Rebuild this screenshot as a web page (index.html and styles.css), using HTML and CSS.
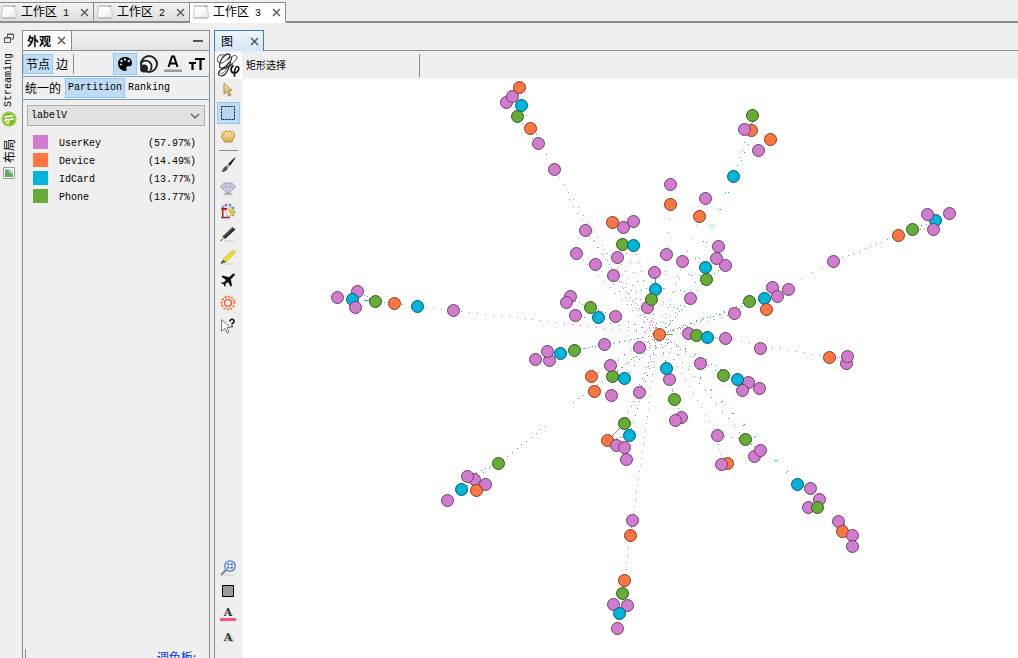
FILE: index.html
```html
<!DOCTYPE html>
<html lang="zh-CN">
<head>
<meta charset="utf-8">
<title>Gephi</title>
<link rel="stylesheet" href="styles.css">
</head>
<body>
<svg class="defs" aria-hidden="true">
  <defs>
    <linearGradient id="paper" x1="0" y1="0" x2="1" y2="1"><stop offset="0.4" stop-color="#fff"/><stop offset="1" stop-color="#e6e2e2"/></linearGradient>
    <linearGradient id="gold" x1="0" y1="0" x2="0" y2="1"><stop offset="0" stop-color="#fff0b8"/><stop offset="1" stop-color="#d9a43c"/></linearGradient>
    <symbol id="win" viewBox="0 0 16 14"><path d="M1.500.5h13l1 12H.5z" fill="url(#paper)" stroke="#c9c6c6"/><path d="M2 1.500h12" stroke="#d9d3d3"/><path d="M11 1.500h3" stroke="#e08a78"/><path d="M1 13.500h14" stroke="#999" opacity=".5"/></symbol>
    <symbol id="close" viewBox="0 0 9 9"><path d="M1 1l7 7M8 1l-7 7" stroke="#555" stroke-width="1.400"/></symbol>
  </defs>
</svg>

<nav class="workspaces" aria-label="工作区">
  <div class="workspace first"><svg class="win"><use href="#win"/></svg><button class="tab-name">工作区<span class="latin"> 1</span></button><button class="close" aria-label="关闭"><svg><use href="#close"/></svg></button></div>
  <div class="workspace"><svg class="win"><use href="#win"/></svg><button class="tab-name">工作区<span class="latin"> 2</span></button><button class="close" aria-label="关闭"><svg><use href="#close"/></svg></button></div>
  <div class="workspace active"><svg class="win"><use href="#win"/></svg><button class="tab-name">工作区<span class="latin"> 3</span></button><button class="close" aria-label="关闭"><svg><use href="#close"/></svg></button></div>
  <div class="workspace-rest"></div>
</nav>

<main class="work">
  <aside class="rail">
    <button class="rail-restore" aria-label="还原"><svg width="10" height="11" viewBox="0 0 10 11"><path d="M3.500 5V1h6v5h-3M3 1.500h7" fill="none" stroke="#555"/><path d="M.5 4.500h6v5h-6zM0 5h7" fill="none" stroke="#555"/></svg></button>
    <button class="rail-tab latin">Streaming</button>
    <svg class="rail-icon" width="16" height="16" viewBox="0 0 16 16"><circle cx="8" cy="8" r="7.500" fill="#79bd1f"/><circle cx="8" cy="8" r="6.500" fill="none" stroke="#a9d965"/><path d="M4 7c1.500-3 2.500-1 4-1.500S10 4 12 5.500M3.500 10c2-3 3-.5 4.500-1s2.500-2 4.500-.5M5 12.300c1.500-2 2-.3 3.500-.8" fill="none" stroke="#fff" stroke-width="1.700"/></svg>
    <button class="rail-tab layout-tab">布局</button>
    <svg width="12" height="12" viewBox="0 0 12 12"><path d="M.5.5h11v11H.5z" fill="#fff" stroke="#999"/><path d="M2 2h8v8H2z" fill="#6fbfd6"/><path d="M2 4l2-1 2 3 4 2v2H2z" fill="#6aa84f"/><path d="M6 2h4v4L8 5z" fill="#d9efc0"/></svg>
  </aside>

  <section class="appearance">
    <header class="panel-head">
      <div class="panel-tab"><h2>外观</h2><button class="close" aria-label="关闭"><svg><use href="#close"/></svg></button></div>
      <button class="minimize" aria-label="最小化"></button>
    </header>
    <div class="bar elements">
      <button class="pick on">节点</button><button class="pick">边</button><span class="rule"></span>
      <div class="attributes">
        <button class="attr on" aria-label="颜色"><svg width="18" height="18" viewBox="0 0 18 18"><path d="M9 2C4.500 2 2 5 2 8.500S5 16 9 16c2.200 0 1.500-2 1.300-2.800C10 12 11 11 12.500 11.200c2 .3 3.500-.5 3.500-3C16 4.500 13 2 9 2z" fill="#000"/><g fill="#bcdcf4"><circle cx="5" cy="9.500" r="1.100"/><circle cx="5.500" cy="6" r="1.200"/><circle cx="9" cy="4.500" r="1.200"/><circle cx="12.800" cy="6" r="1.200"/></g></svg></button>
        <button class="attr" aria-label="大小"><svg width="20" height="20" viewBox="0 0 20 20"><circle cx="10" cy="10" r="8" fill="#f4f4f4" stroke="#222" stroke-width="2"/><path d="M2.500 8.500A5.800 5.800 0 1 1 11 16.500" fill="none" stroke="#222" stroke-width="1.800"/><circle cx="5" cy="14.500" r="4" fill="#222"/></svg></button>
        <button class="attr" aria-label="标签颜色"><svg width="18" height="18" viewBox="0 0 18 18"><path d="M4.500 12L8 1.500h2L13.500 12M6 8.500h6" fill="none" stroke="#000" stroke-width="2"/><path d="M0 14.500h18v2.500H0z" fill="#999"/></svg></button>
        <button class="attr" aria-label="标签大小"><svg width="16" height="18" viewBox="0 0 16 18"><path d="M6 4h10M11.500 3v12M0 8h7M3.500 7v8" fill="none" stroke="#000" stroke-width="2.200"/></svg></button>
      </div>
    </div>
    <div class="bar modes"><button class="pick unique">统一的</button><button class="pick latin on">Partition</button><button class="pick latin">Ranking</button></div>
    <div class="partition">
      <label class="combo"><select class="latin" aria-label="属性"><option>labelV</option></select><svg width="10" height="6" viewBox="0 0 10 6"><path d="M1 1l4 4 4-4" fill="none" stroke="#555" stroke-width="1.200"/></svg></label>
      <table class="legend latin">
        <tr><td class="swatch"><i class="user"></i></td><td>UserKey</td><td class="share">(57.97%)</td></tr>
        <tr><td class="swatch"><i class="device"></i></td><td>Device</td><td class="share">(14.49%)</td></tr>
        <tr><td class="swatch"><i class="card"></i></td><td>IdCard</td><td class="share">(13.77%)</td></tr>
        <tr><td class="swatch"><i class="phone"></i></td><td>Phone</td><td class="share">(13.77%)</td></tr>
      </table>
    </div>
    <footer class="palette"><a href="#palette">调色板:</a></footer>
  </section>

  <section class="graph">
    <header class="graph-head"><div class="graph-tab"><h2>图</h2><button class="close" aria-label="关闭"><svg><use href="#close"/></svg></button></div></header>
    <div class="graph-bar">
      <svg class="logo" width="27" height="27" viewBox="0 0 27 27"><g fill="none" stroke="#333" stroke-linecap="round"><path d="M12.500 7.500C15 5.500 16 2 13.500 2 9 2 4.500 9 4.500 13.500c0 4 4 3 7 0 3-3 5.500-6.500 5-8" stroke-width="1.300"/><path d="M9 3C5 1.500 1.500 5 2.500 9c1 3 5 2.500 8 0 4-3 9-7 11-5s-2 6-5 8" stroke-width=".9"/><path d="M15.500 10c-1.500 6-4 14-9 14-4 0-4-4-1-6s8-2.500 12-6" stroke-width="1.200"/><path d="M13.500 10.500c-1 5-3.500 11-7.500 11-2 0-2-2 0-3.500 3-2 7-1 9.500-4" stroke-width=".7"/><path d="M18 14c-3 2-2.500 7 1.500 7s6-6.500 2.500-6.500c-2 0-2.500 4-2.500 9.500" stroke="#111" stroke-width="1.700"/></g></svg>
      <span class="tool-name">矩形选择</span><span class="rule"></span>
    </div>
    <div class="graph-body">
      <div class="tools" role="toolbar" aria-label="工具">
        <button class="tool" aria-label="直接选择"><svg viewBox="0 0 16 16"><path d="M4 1l8 7.500H8.800l2 4.800-2 .9-2-4.700L4 12z" fill="url(#gold)" stroke="#b1864b"/></svg></button>
        <button class="tool on" aria-label="矩形选择"><svg viewBox="0 0 16 16"><path d="M1.500 1.500h13v13h-13z" fill="#b4d8f4" stroke="#111" stroke-dasharray="2 1"/></svg></button>
        <button class="tool" aria-label="拖动"><svg viewBox="0 0 16 16"><path d="M4.500 14C4 11.500 1.500 10.500 1.500 8.500c0-1.200 1-1.500 1.500-1.200C1.500 4.500 3.500 3 5 4.200c.3-1.700 2.700-1.700 3.200-.4C9 2.300 11.200 2.500 11.500 4c1.500-.8 2.700.2 2.500 2 1 2 .2 4.200-1.500 5.500l-.5 2.500z" fill="url(#gold)" stroke="#b78a3a"/><path d="M5 4.500v2M8.200 4v2M11.500 4.500v2" stroke="#c89b49" stroke-width=".8"/></svg></button>
        <hr>
        <button class="tool" aria-label="画笔"><svg viewBox="0 0 16 16"><path d="M14.500.5L8 7l2 2L15.500 1z" fill="#222"/><path d="M8 7l2 2-2 2-2-2z" fill="#aaa"/><path d="M6 9l2 2c-1 3-4 4-7 4 2-1 2-5 5-6z" fill="#555244"/></svg></button>
        <button class="tool" aria-label="大小画笔"><svg viewBox="0 0 16 16"><ellipse cx="8" cy="14" rx="5" ry="1.200" fill="#bbb"/><path d="M4 3h8l3.500 4L8 14 .5 7z" fill="#d6d5ec" stroke="#9897b5"/><path d="M1 7h14M4 3l1.500 4L8 13l2.500-6L12 3M5.500 7L8 3l2.500 4" fill="none" stroke="#9f9ebd" stroke-width=".7"/></svg></button>
        <button class="tool" aria-label="油漆桶"><svg viewBox="0 0 16 16"><g><circle cx="3" cy="4" r="1.500" fill="#9b7bd4"/><circle cx="6" cy="2" r="1.500" fill="#ca62bd"/><circle cx="10" cy="2" r="1.500" fill="#55a3dc"/><circle cx="13" cy="5" r="1.500" fill="#54b568"/><circle cx="14" cy="9" r="1.500" fill="#81c84e"/><circle cx="13" cy="12" r="1.500" fill="#d6a744"/></g><path d="M5 7l6-3 3 6-6 4z" fill="#fff" stroke="#aaa"/><path d="M8 7l3-1.500 2 4-3 2z" fill="#f6ba20"/><path d="M1 5h6v2H3.500v7H2V8z" fill="#b91c25"/><path d="M1 14.500h9" stroke="#a12b2b" stroke-width="1.500"/></svg></button>
        <button class="tool" aria-label="铅笔"><svg viewBox="0 0 16 16"><path d="M4 15h10" stroke="#ccc"/><path d="M12.500 1l3 2.500L5 13l-2.500-2.500z" fill="#292929"/><path d="M13 2L4 10.500" stroke="#777"/><path d="M2.500 10.500L5 13l-4.500 2z" fill="#d4bd94"/><path d="M.5 15l1.700-.7-.9-1z" fill="#111"/></svg></button>
        <button class="tool" aria-label="边铅笔"><svg viewBox="0 0 16 16"><path d="M4 15h10" stroke="#ccc"/><path d="M13.500 1l2 2L6 13l-3-2.500z" fill="#f2e51a" stroke="#a9a41b" stroke-width=".7"/><path d="M3 10.500L6 13l-4.500 2-1-1z" fill="#62635d"/></svg></button>
        <button class="tool" aria-label="最短路径"><svg viewBox="0 0 16 16"><path d="M14.500 2c-1-1-2 0-3.500 1.500L9 5.200 2.500 3.500l-1 1.200L6 8l-2.300 2.500-2.200-.3-.7.8 2.700 1.300 1.300 2.700.8-.8-.1-2.200L8 10l2.800 4.700 1.200-1.200L10.800 7.200 13 5c1.500-1.500 2.500-2 1.500-3z" fill="#15120b"/></svg></button>
        <button class="tool" aria-label="热图"><svg viewBox="0 0 16 16"><g fill="none" stroke="#ff7a2c"><circle cx="8" cy="8" r="6.400" stroke-width="2.300" stroke-linecap="round" stroke-dasharray=".1 3.251"/><circle cx="8" cy="8" r="3.400" stroke="#ff5a36" stroke-width="1.400"/></g></svg></button>
        <button class="tool" aria-label="编辑"><svg viewBox="0 0 16 16"><path d="M1.500 1.500l9 8H7l2 4.500-2 1-2-4.700-3.500 3z" fill="#fff" stroke="#777"/><path d="M10 3.500C10 .5 14.500.5 14 3.500 14 5 12 5 12 6.500M12 7.500v1.700" fill="none" stroke="#222" stroke-width="1.700"/></svg></button>
        <span class="gap"></span>
        <button class="tool" aria-label="居中"><svg viewBox="0 0 16 16"><path d="M6 10l-5 5" stroke="#8a8a8a" stroke-width="2.400"/><path d="M4 15h10" stroke="#ccc"/><circle cx="10" cy="6" r="5.200" fill="#eaf2ff" stroke="#4e72d2" stroke-width="1.300"/><path d="M8 5.500V4h1.500M10.500 4H12v1.500M12 6.500V8h-1.500M9.500 8H8V6.500" fill="none" stroke="#17378c" stroke-width="1.100"/></svg></button>
        <button class="tool" aria-label="背景颜色"><svg viewBox="0 0 16 16"><path d="M2.500 2.500h11v11h-11z" fill="#999" stroke="#000"/></svg></button>
        <button class="tool letter" aria-label="重置标签颜色"><span>A</span><i></i></button>
        <button class="tool letter shadow" aria-label="显示标签"><span>A</span></button>
      </div>
      <svg id="canvas" class="canvas" viewBox="242 79 776 579" preserveAspectRatio="xMinYMin meet" role="img" aria-label="图"></svg>
    </div>
  </section>
</main>
<script src="graph.js"></script>
</body>
</html>
```

FILE: styles.css
```css
* { box-sizing: border-box; }
body {
  margin: 0;
  height: 100vh;
  overflow: hidden;
  display: flex;
  flex-direction: column;
  background: #efefef;
  color: #000;
  font: 12px/16px "Noto Sans CJK SC", sans-serif;
}
button { border: 0; padding: 0; margin: 0; background: none; color: inherit; font: inherit; white-space: pre; }
h2 { margin: 0; font: inherit; }
svg { display: block; flex: none; }
.defs { position: absolute; width: 0; height: 0; }
.latin { font-family: "Liberation Mono", monospace; font-size: 10px; }
.close { display: flex; }
.close svg { width: 9px; height: 9px; }
.rule { width: 1px; background: #898989; }

.workspaces { display: flex; height: 23px; padding-top: 2px; flex: none; }
.workspace {
  display: flex;
  align-items: center;
  width: 96px;
  padding: 0 4px 0 3px;
  border: solid #898c95;
  border-width: 1px 1px 2px 0;
  background: linear-gradient(#f2f2f2, #dfdfdf);
}
.workspace.first { width: 94px; padding-left: 1px; }
.workspace.active { background: #fff; border-bottom-color: #fff; }
.workspace .win { width: 16px; height: 14px; margin-right: 4px; }
.workspace .close { margin-left: auto; }
.workspace-rest { flex: 1; border-bottom: 2px solid #898c95; }

.work { flex: 1; min-height: 0; display: flex; padding-top: 7px; }
.rail { width: 22px; flex: none; display: flex; flex-direction: column; align-items: center; padding: 3px 4px 0 0; }
.rail-restore { height: 11px; }
.rail-tab { writing-mode: vertical-rl; text-orientation: sideways; transform: rotate(180deg); margin-top: 9px; }
.rail-tab.layout-tab { margin-top: 12px; }
.rail-icon { margin-top: 4px; }
.rail > svg:last-child { margin-top: 4px; }

.appearance { width: 188px; flex: none; display: flex; flex-direction: column; border: solid #898c95; border-width: 1px 1px 0; }
.panel-head { display: flex; height: 20px; border-bottom: 1px solid #898c95; background: linear-gradient(#f2f2f2, #e2e2e2); }
.panel-tab { display: flex; align-items: center; gap: 6px; padding: 0 5px 0 4px; background: #fff; border-right: 1px solid #898c95; }
.panel-tab h2 { font-weight: 700; }
.minimize { width: 10px; height: 2px; background: #555; margin: 9px 6px 0 auto; }
.bar { display: flex; border-bottom: 1px solid #7f9db9; }
.pick { border: 1px solid transparent; padding: 0 2px; }
.pick.on, .attr.on, .tool.on { background: #c0dcf3; border-color: #90c8f6; }
.elements { height: 26px; padding: 3px 0 2px; }
.elements .rule { margin-left: 2px; }
.attributes { display: flex; align-items: stretch; margin: -1px 0 -1px auto; }
.attr { width: 24px; border: 1px solid transparent; display: flex; align-items: center; justify-content: center; }
.modes { height: 23px; padding: 1px 0 1px; }
.modes .unique { padding: 0 3px 0 1px; }
.partition { flex: 1; padding: 5px 4px; }
.combo { display: flex; align-items: center; height: 21px; border: 1px solid #adadad; background: #e1e1e1; padding-right: 4px; }
.combo select { flex: 1; border: 0; padding: 0 3px; background: none; appearance: none; color: inherit; }
.legend { width: 100%; margin-top: 9px; border-collapse: collapse; }
.legend td { height: 18px; padding: 0; line-height: 16px; }
.legend .swatch { width: 32px; padding-left: 6px; vertical-align: top; }
.legend i { display: block; width: 15px; height: 14px; }
.legend .share { text-align: right; padding-right: 9px; }
.user { background: #d17ccf; }
.device { background: #ff7543; }
.card { background: #00b5db; }
.phone { background: #67ac36; }
.palette { height: 9px; overflow: hidden; display: flex; justify-content: flex-end; margin-left: 2px; padding-right: 13px; border-left: 1px solid #898989; }
.palette a { color: #0033ff; text-decoration: none; }

.graph { flex: 1; min-width: 0; margin-left: 4px; display: flex; flex-direction: column; border-left: 1px solid #898c95; }
.graph-head { display: flex; height: 21px; flex: none; border-bottom: 1px solid #898c95; margin-left: -1px; }
.graph-tab { display: flex; align-items: center; gap: 17px; height: 21px; padding: 0 4px 0 6px; border: solid #3c7fb1; border-width: 1px 1px 0; background: linear-gradient(#eef5fd, #d5e6f8); }
.graph-bar { display: flex; align-items: center; height: 28px; flex: none; font-size: 10px; }
.logo { background: #fff; }
.tool-name { margin-left: 4px; }
.graph-bar .rule { height: 23px; margin-left: 133px; }
.graph-body { flex: 1; min-height: 0; display: flex; background: #fff; }
.tools { width: 27px; flex: none; display: flex; flex-direction: column; align-items: center; gap: 1px; padding-bottom: 10px; background: #efefef; }
.tool { width: 23px; height: 22px; border: 1px solid transparent; padding-right: 1px; display: flex; align-items: center; justify-content: center; }
.tool svg { width: 16px; height: 16px; }
.tools hr { width: 19px; margin: 2px 0; border: 0; border-top: 1px solid #898989; }
.gap { flex: 1; }
.letter { flex-direction: column; font: bold 11px/11px "DejaVu Serif", serif; color: #333; }
.letter i { width: 16px; height: 3px; background: #ff527d; }
.shadow { text-shadow: 2px 1px #c5c5c5; }
.canvas { flex: 1; min-width: 0; width: 100%; height: 100%; }
.node.p { fill: #d17ccf; stroke: #684068; }
.node.o { fill: #ff7543; stroke: #803a21; }
.node.b { fill: #00b5db; stroke: #005a6d; }
.node.g { fill: #67ac36; stroke: #33561b; }
.edge { shape-rendering: crispEdges; }
.edge.p { fill: #d17ccf; }
.edge.b { fill: #00b5db; }
.edge.g { fill: #67ac36; }
```

FILE: graph.js
```js
// Node kinds: p = UserKey, o = Device, b = IdCard, g = Phone. Later nodes are drawn on top.
const nodes = `
p506,102 p512,96 o519,87 g517,116 b521,105 o530,128 p538,143 p554,169
o751,130 g752,115 p744,129 o770,139 p758,150 b733,176
p670,184 o670,204 p705,198 o699,216
o612,222 p623,227 p633,221 g622,244 b633,245 p617,257
p585,230 p576,253 p595,264 p613,275 p666,254 p682,261 p654,272
p718,246 p725,265 p716,258 b705,267 g706,279
b655,289 p647,307 g651,299 p690,298
p570,296 p566,302 p575,315 g590,307 b598,317 p615,316
o659,334 p688,333 g696,335 b707,337 p725,338 p760,348
p734,313 g749,301 b764,298 p772,287 p777,296 p788,289 o766,309
p639,347 p604,344 p700,363 p669,379 b666,368 g674,399
g612,376 p610,365 b624,378 o591,376 o594,391 p611,395 p639,392
g723,375 p748,382 p742,390 b737,379 p759,388
p535,359 p549,360 p547,351 b560,353 g574,350
p337,297 p357,291 b352,299 p355,307 g375,301 o394,303 b417,306 p453,310
g498,463 p474,479 p467,476 b461,489 p485,484 o476,490 p447,500
g624,423 o607,440 p616,445 p624,447 b629,435 p626,459
p681,417 p675,420 p717,435 o727,463 p721,464 g745,439 p754,456 p760,450
b797,484 p810,488 p819,499 p808,507 g817,507 p838,521 o842,531 p852,535 p852,546
p632,520 o630,535 o829,357 p846,363 p847,356
o624,580 g622,593 p613,604 p627,605 b619,613 p617,628
p833,261 o898,235 g912,229 b935,220 p927,214 p933,229 p949,213`;

// Each edge: kind, start, end, distance between dots.
const edges = `
p554,169,659,334,9 p569,199,652,334,8 g517,116,542,152,9 b521,105,554,169,11
p585,230,655,330,7 p576,253,655,333,8 p595,264,659,334,9 p617,257,659,334,8 p613,275,659,334,7
g622,244,659,334,10 b633,245,659,334,9 b655,272,655,289,1 p647,307,659,334,4
p670,204,661,334,14 p705,198,661,331,14 p666,254,659,334,17 p682,261,659,334,8
b733,176,660,334,18 b735,176,665,334,18 b744,142,733,176,8 b748,144,738,166,9 g752,115,751,130,1
b705,267,661,334,9 g706,279,660,334,7 p690,298,661,334,7 g706,279,725,265,5
p453,310,659,334,8 p417,306,453,310,8 g364,295,375,301,3 b364,300,368,300,1 g375,301,417,306,9
g575,301,590,307,4 g590,307,615,316,4 b575,315,659,334,9 p615,316,659,334,7 g598,309,659,334,8
g574,350,604,344,3 b560,353,659,334,6 p604,344,659,334,5
g498,463,547,424,6 g573,402,659,339,6 g467,476,498,463,5 b461,489,492,466,7
p610,365,659,334,9 b624,378,659,334,8 g612,376,659,334,7 p591,376,655,334,8
g624,423,659,334,6 b629,435,659,334,7 p639,392,659,334,7 g624,423,607,440,1 g607,440,629,435,3
p632,520,658,334,7 p632,520,624,580,7 b666,368,659,334,7 g674,399,659,334,8 g669,379,681,417,10
p717,435,659,334,8 p721,464,717,435,5 g745,439,659,334,9 g717,435,745,439,7
b797,484,659,334,16 b798,483,662,336,16 g744,440,760,450,4 b797,484,819,499,6 b840,519,852,535,3
p700,363,659,334,6 g723,375,659,334,9 b737,379,659,334,10 p748,382,659,334,12
g659,334,671,334,1 p688,333,659,334,8 b707,337,725,338,2 p725,338,829,357,8 p829,357,847,357,2
p734,313,659,334,7 g749,301,659,334,7 b764,298,659,334,6 g739,308,659,334,10
p833,261,788,285,12 g898,235,833,261,6 b912,229,935,220,5 g912,229,933,229,4
p772,287,777,296,4 p639,347,659,334,5`;

const canvas = document.getElementById("canvas");
const add = (tag, attrs) => {
  const el = document.createElementNS("http://www.w3.org/2000/svg", tag);
  for (const key in attrs) el.setAttribute(key, attrs[key]);
  canvas.appendChild(el);
};

for (const item of edges.trim().split(/\s+/)) {
  const [x1, y1, x2, y2, step] = item.slice(1).split(",").map(Number);
  const length = Math.hypot(x2 - x1, y2 - y1);
  let d = "";
  for (let t = 0; t <= length; t += step) {
    const x = Math.round(x1 + (x2 - x1) * t / length);
    const y = Math.round(y1 + (y2 - y1) * t / length);
    d += `M${x} ${y}h1v1h-1z`;
  }
  add("path", { class: "edge " + item[0], d });
}
// Circles are centred on the middle of their pixel.
for (const item of nodes.trim().split(/\s+/)) {
  const [x, y] = item.slice(1).split(",").map(Number);
  add("circle", { class: "node " + item[0], cx: x + 0.5, cy: y + 0.5, r: 6 });
}
```
